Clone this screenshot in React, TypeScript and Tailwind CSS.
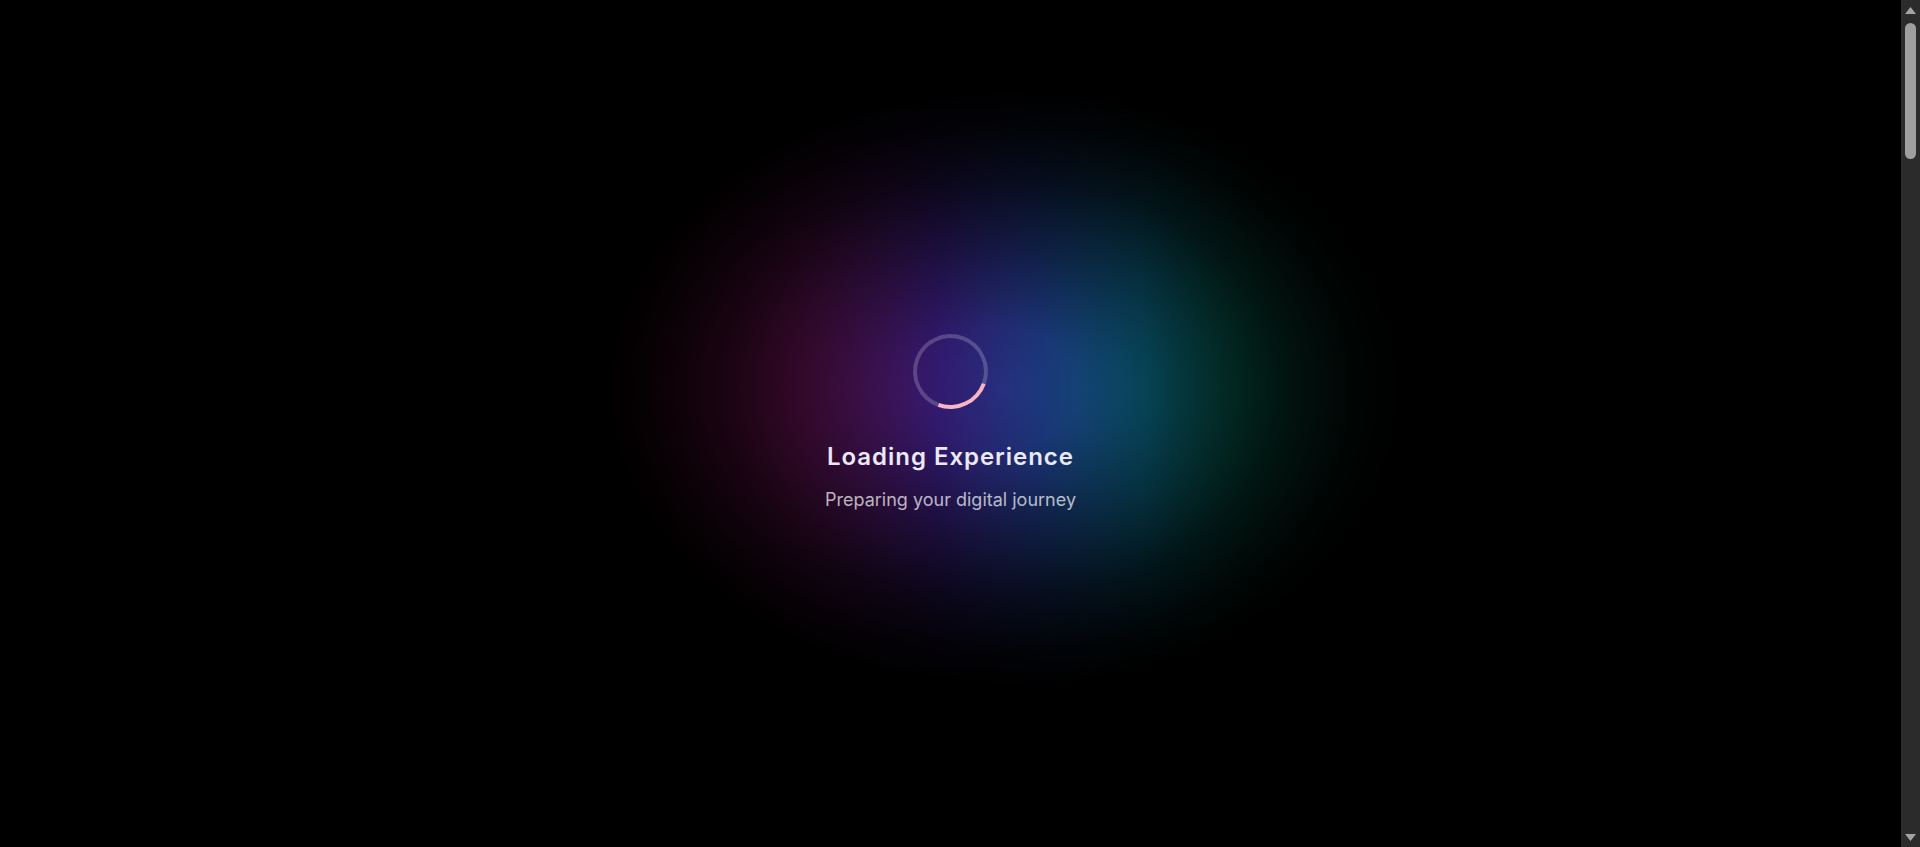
const LoadingScreen = () => {
  return (
    <div className="relative flex flex-1 items-center justify-center overflow-hidden bg-black">
      {/* glow */}
      <div className="pointer-events-none absolute left-1/2 top-1/2 h-[600px] w-[800px] -translate-y-1/2 translate-x-[calc(-50%+50px)] -mt-[36px] bg-[linear-gradient(90deg,#800b3c_0%,#681258_25%,#361c78_42%,#1d3a82_55%,#0a627e_68%,#066654_80%,#05503c_100%)] [mask-image:radial-gradient(closest-side,#000_0%,rgba(0,0,0,0.9)_20%,rgba(0,0,0,0.55)_45%,rgba(0,0,0,0.22)_70%,rgba(0,0,0,0.06)_88%,transparent_100%)]" />

      <div className="relative z-10 flex flex-col items-center" style={{ fontFamily: "Inter, 'Noto Sans', sans-serif" }}>
        <div className="h-[75px] w-[75px] rotate-[155deg] rounded-full border-4 border-white/20 border-t-[#fbb4c2]" />
        <h2 className="mt-8 text-2xl font-semibold tracking-[0.04em] text-[#ece8f4]">Loading Experience</h2>
        <p className="mt-[13px] text-lg text-white/70">Preparing your digital journey</p>
      </div>
    </div>
  );
};

// page scrollbar (the page behind the loader is long)
const ScrollRail = () => {
  return (
    <div className="flex w-[19px] flex-shrink-0 flex-col items-center bg-[#2b2b2b]">
      <svg width="11" height="7" viewBox="0 0 11 7" className="mt-[7px]">
        <polygon points="5.5,0 11,7 0,7" fill="#a3a3a3" />
      </svg>
      <div className="mt-[9px] h-[136px] w-[11px] rounded-full bg-[#9f9f9f]" />
      <div className="flex-1" />
      <svg width="11" height="7" viewBox="0 0 11 7" className="mb-[6px]">
        <polygon points="0,0 11,0 5.5,7" fill="#a3a3a3" />
      </svg>
    </div>
  );
};

const App = () => {
  return (
    <div className="flex h-screen bg-black">
      <LoadingScreen />
      <ScrollRail />
    </div>
  );
};

export default App;
